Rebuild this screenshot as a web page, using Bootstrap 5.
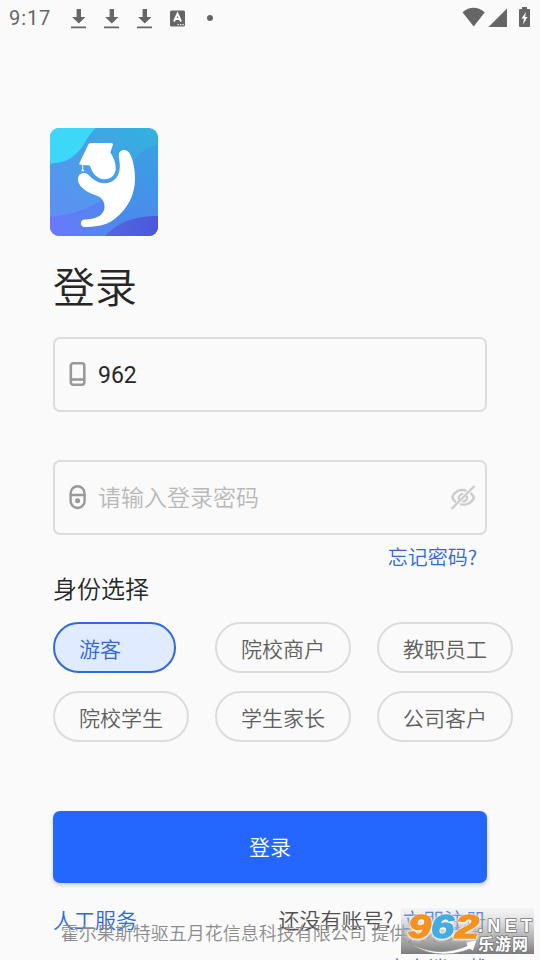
<!DOCTYPE html>
<html lang="zh-CN">
<head>
<meta charset="utf-8">
<meta name="viewport" content="width=device-width, initial-scale=1">
<title>登录</title>
<link href="https://cdn.jsdelivr.net/npm/bootstrap@5.3.0/dist/css/bootstrap.min.css" rel="stylesheet">
<style>
body{background:#fafafa;color:#272727;font-family:Roboto,"Noto Sans CJK SC",sans-serif;font-weight:350;height:960px;overflow:hidden}
svg{display:block;flex:none}
.screen{width:540px;height:960px}
.statusbar{height:36px;padding:0 9px 0 9px;color:#666}
.clock{font-size:20px;line-height:38px;letter-spacing:.9px;width:60px;font-weight:400;color:#666}
.login{padding:92px 53px 0}
.app-logo{margin-left:-3px}
.title{font-size:42px;line-height:60px;margin-top:23px;font-weight:350}
.field{height:75px;border:2px solid #dcdcdc!important;border-radius:7px;padding:0 9px 0 14px}
.field .form-control{font-size:23px;line-height:34px;padding:2px 0 0 11px;color:#272727;box-shadow:none;font-weight:400}
.field .form-control::placeholder{color:#b8b8b8;opacity:1;font-weight:350}
.account{margin-top:18px}
.forgot{font-size:20px;line-height:30px;margin:7px 10px 1px 0;font-family:"Noto Sans CJK SC",sans-serif}
.blue,.blue:hover{color:#2e67df}
.section-title{font-size:24px;line-height:36px;font-weight:350;margin-top:-1px}
.roles{display:grid;grid-template-columns:136px 136px 136px;column-gap:26px;row-gap:18px;margin-top:14px;width:460px}
.role{height:51px;border:2px solid #dcdcdc;border-radius:26px;padding:4px 0 0 24px;font-size:21px;line-height:42px;font-weight:350;color:#606060;text-align:left;width:136px}
.role.chosen{width:123px;border-color:#3168da;background:#e0ebff;color:#2e67df}
.submit{height:72px;margin-top:69px;border:0;border-radius:7px;background:#2367fe;color:#fff;font-size:21px;font-weight:350;padding-top:10px;box-shadow:0 2px 4px #0003}
.links{font-size:21px;line-height:32px;margin:20px 1px 0 0;color:#505050;font-family:"Noto Sans CJK SC",sans-serif}
.download{font-size:20px;line-height:32px;margin-top:18px}
.company{left:0;right:0;top:920px;font-size:18px;line-height:27px;color:#8c8c8c;white-space:pre}
.stamp{left:401px;top:908px}
.digits{filter:drop-shadow(0 0 1px #fff) drop-shadow(0 1px 1px #fff)}
</style>
</head>
<body>
<div class="screen position-relative overflow-hidden">
  <header class="statusbar d-flex align-items-center">
    <span class="clock">9:17</span>
    <svg width="150" height="36" fill="#666">
      <defs><path id="dl" d="M7.600 9h4.400v8h4.500l-6.700 6.500L3.100 17h4.500zM2 26.500h15v1.800H2z"/></defs>
      <use href="#dl" x="0"/><use href="#dl" x="33"/><use href="#dl" x="66"/>
      <rect x="101" y="10.500" width="15" height="16" rx="1.500"/>
      <path d="M105 21.500l3.500-8 3.500 8M106.200 19h4.600" fill="none" stroke="#fff" stroke-width="1.900"/>
      <path d="M108.500 24h1.300v1.300h-1.300zm2.500 0h1.300v1.300H111zm2.400 0h1.300v1.300h-1.300z" fill="#fff"/>
      <circle cx="141" cy="18" r="3"/>
    </svg>
    <svg class="ms-auto" width="70" height="36" fill="#666">
      <path d="M1.500 12.200Q12.500 3.500 23.800 12.200L12.700 26.500zM27.500 27L46 8.500V27z"/>
      <path d="M61 7h5v2h2q1 0 1 1v16q0 1-1 1h-9q-1 0-1-1V10q0-1 1-1h2z"/>
      <path d="M65 12L60.500 18.500h2.500L62 24.500l4.500-7.500H64z" fill="#fff"/>
    </svg>
  </header>

  <main class="login">
    <svg class="app-logo" width="108" height="108" viewBox="0 0 108 108">
      <defs>
        <linearGradient id="sky" x1=".8" y1="0" x2=".1" y2="1"><stop stop-color="#35aee0"/><stop offset="1" stop-color="#638bf5"/></linearGradient>
        <linearGradient id="side" x1=".6" y1="0" x2=".4" y2="1"><stop stop-color="#3a9fe3"/><stop offset="1" stop-color="#4f86ec"/></linearGradient>
        <linearGradient id="low" x1="0" y1="0" x2="1" y2="0"><stop stop-color="#6a78fb"/><stop offset="1" stop-color="#4b8aeb"/></linearGradient>
        <linearGradient id="deep" x1="0" y1="0" x2="1" y2="0"><stop stop-color="#5668df"/><stop offset="1" stop-color="#4a57dc"/></linearGradient>
        <clipPath id="tile"><rect width="108" height="108" rx="9"/></clipPath>
      </defs>
      <g clip-path="url(#tile)">
        <path fill="url(#sky)" d="M0 0h108v108H0z"/>
        <path fill="#3dd7f8" d="M0 0h46C36 9 35 17 27 25Q16 36 0 35.500z"/>
        <path fill="url(#side)" d="M108 17Q91 20 82 35Q72 60 55 66L50 108H108z"/>
        <path fill="url(#low)" d="M0 89Q34 85 53 71L70 84L72 108H0z"/>
        <path fill="url(#deep)" d="M55 108Q72 88 108 88V108z"/>
      </g>
      <g fill="#fff">
        <path d="M40.500 15H61q2.500 0 1.800 2.200L60.300 24.500C64 30 65.700 35 65.700 40 65.700 47 61 51.300 54.500 51.300 47.500 51.300 42.500 46 39.800 37.600L30.500 36.800Q28.800 36.500 29.500 35L38.300 16.500Q39 15 40.500 15z"/>
        <path d="M32.200 37h1v4l1 2.300h-3l1-2.300z"/>
        <path d="M28 51.500C28 45 34 43.500 38 46.500 43 51.500 48 55.300 54.500 55.300 65 55.300 70.500 47 69.800 36 69.500 32 68.500 29 68.800 26.500 69.500 20.500 77.500 20.500 80 26 83.500 33 85 42 85 51 85 66 78 81 64 91.500 55 98 44 99 34 99 29.800 98.500 29.800 91.700 34.500 91.500 45 91.500 54.500 87.500 54.500 79 54.500 72 51 69 45 67 36 64 28 58 28 51.500z"/>
      </g>
    </svg>
    <h1 class="title mb-0">登录</h1>

    <form>
      <div class="field account d-flex align-items-center">
        <svg width="18" height="26" fill="none" stroke="#999" stroke-width="2.600"><rect x="1.800" y="1.300" width="13.500" height="21.500" rx="2.500"/><path d="M2 17.500h13.500"/></svg>
        <input class="form-control border-0 bg-transparent" value="962" aria-label="账号">
      </div>
      <div class="field d-flex align-items-center mt-5">
        <svg width="18" height="26" fill="none" stroke="#999" stroke-width="2.400"><path d="M1.600 10V8.500a7 7.200 0 0 1 14 0V10M1.600 10h14v6a7 7 0 0 1-14 0z"/><circle cx="8.600" cy="15.800" r="2.500" fill="#999" stroke="none"/></svg>
        <input class="form-control border-0 bg-transparent" type="password" placeholder="请输入登录密码" aria-label="密码">
        <svg width="26" height="26" fill="none" stroke="#ccc" stroke-width="2.300"><path d="M1.500 24L24.500 1M16.500 5.700C9 3.500 4 7 2.300 12.500q1 2.800 3.700 4.700M20.500 8q2.500 2 3.500 4.500c-2 5.500-8 8.500-14 6.500M8.800 14.700Q8 10 13.200 8.500M16.800 10.800c1.200 4-1.500 6-4.500 5.500"/></svg>
      </div>
      <div class="forgot text-end"><a class="blue text-decoration-none" href="#">忘记密码?</a></div>

      <h2 class="section-title mb-0">身份选择</h2>
      <div class="roles">
        <button type="button" class="role chosen">游客</button>
        <button type="button" class="role bg-transparent">院校商户</button>
        <button type="button" class="role bg-transparent">教职员工</button>
        <button type="button" class="role bg-transparent">院校学生</button>
        <button type="button" class="role bg-transparent">学生家长</button>
        <button type="button" class="role bg-transparent">公司客户</button>
      </div>
      <button type="button" class="btn submit w-100">登录</button>
    </form>

    <div class="links d-flex justify-content-between">
      <a class="blue text-decoration-none" href="#">人工服务</a>
      <span>还没有账号? <a class="blue text-decoration-none ms-1" href="#">立即注册</a></span>
    </div>
    <div class="download text-end"><a class="blue text-decoration-none" href="#">客户端下载</a></div>
  </main>

  <div class="company position-absolute text-center">霍尔果斯特驱五月花信息科技有限公司 提供技术支持</div>

  <svg class="stamp position-absolute" width="133" height="48" viewBox="0 0 133 48">
    <defs><linearGradient id="plate" x1="0" y1="0" x2="0" y2="1"><stop stop-color="#ddd" stop-opacity=".2"/><stop offset=".45" stop-color="#b0b0b0" stop-opacity=".65"/><stop offset="1" stop-color="#777" stop-opacity=".97"/></linearGradient></defs>
    <path fill="url(#plate)" d="M0 0h133v46H0z"/>
    <path d="M7 34Q35 51 66 38L65 34 76 32 72 43 69 41Q34 54 7 34z" fill="#fff" stroke="#888" stroke-width=".6"/>
    <g class="digits" font-family="Liberation Sans,sans-serif" font-weight="700" font-style="italic" font-size="34" stroke-width="1.500" stroke-linejoin="round">
      <text x="7" y="30" textLength="23" lengthAdjust="spacingAndGlyphs" fill="#f59220" stroke="#f59220">9</text>
      <text x="30" y="30" textLength="23" lengthAdjust="spacingAndGlyphs" fill="#45ace0" stroke="#45ace0">6</text>
      <text x="54" y="30" textLength="24" lengthAdjust="spacingAndGlyphs" fill="#f59220" stroke="#f59220">2</text>
    </g>
    <g fill="#fff" stroke="#777" stroke-width="1.600" paint-order="stroke" font-weight="700">
      <text x="77" y="24" font-family="Liberation Sans,sans-serif" font-size="18" textLength="54">.NET</text>
      <text x="77" y="42" font-family="Noto Sans CJK SC,sans-serif" font-size="16" textLength="50">乐游网</text>
    </g>
  </svg>
</div>
<script src="https://cdn.jsdelivr.net/npm/bootstrap@5.3.0/dist/js/bootstrap.bundle.min.js"></script>
</body>
</html>
